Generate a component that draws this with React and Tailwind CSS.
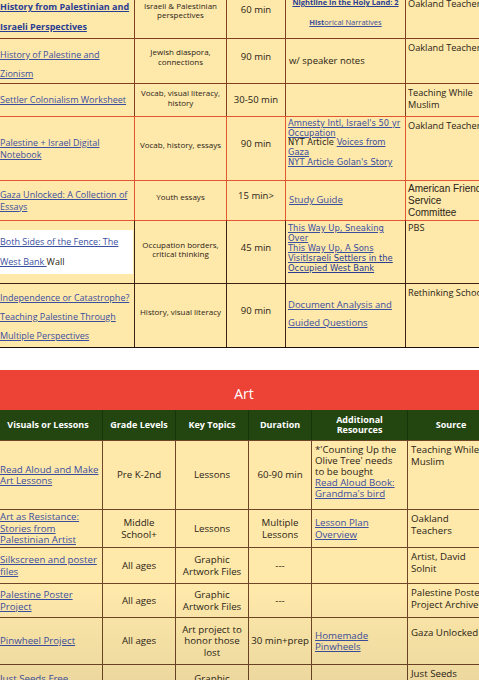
import React from "react"

const SANS = "font-['Open_Sans',sans-serif]"
const VERDANA = "font-['DejaVu_Sans',sans-serif]"
const link = "text-[#3c4f9f] underline"
const boldLink = "text-[#2a3d92] underline font-bold"

// top table border colours, one per row
const BROWN = "border-[#7e3f22]"
const ORANGE = "border-[#e2572f]"
const DARK = "border-[#3a2312]"

const Cell = ({ border, className = "", children, h }) => (
  <td
    className={`border-t border-r ${border} bg-[#fee8aa] p-0 ${className}`}
    style={h ? { height: h } : undefined}
  >
    {children}
  </td>
)

const TopTable = () => (
  <table
    className={`${SANS} w-[522px] table-fixed border-separate border-spacing-0 ml-[-6px] mt-[-13px] text-[#2b2416] border-b border-b-[#1a120a]`}
  >
    <colgroup>
      <col className="w-[141px]" />
      <col className="w-[92px]" />
      <col className="w-[59px]" />
      <col className="w-[120px]" />
      <col className="w-[110px]" />
    </colgroup>
    <tbody>
      <tr>
        <Cell border={BROWN} h={51} className="pl-[6px] align-middle">
          <div className="text-[9px] leading-[20px] pt-[8px]">
            <a className={boldLink}>History from Palestinian and</a>
            <br />
            <a className={boldLink}>Israeli Perspectives</a>
          </div>
        </Cell>
        <Cell border={BROWN} className="text-center align-middle text-[8px] leading-[9.5px] pb-[6px]">
          Israeli &amp; Palestinian
          <br />
          perspectives
        </Cell>
        <Cell border={BROWN} className="text-center align-middle text-[9.5px] pb-[6px]">
          60 min
        </Cell>
        <Cell border={BROWN} className="text-center align-middle text-[7.5px] leading-[20px] pb-[2px]">
          <a className={boldLink}>Nightline in the Holy Land: 2</a>
          <br />
          <a className={link}>
            <b>Hist</b>orical Narratives
          </a>
        </Cell>
        <Cell border={BROWN} className="align-top pl-[2px] pt-[10px] text-[9.2px] leading-[12px]">
          Oakland Teachers
        </Cell>
      </tr>

      <tr>
        <Cell border={BROWN} h={44} className="pl-[6px] align-middle">
          <div className="text-[9px] leading-[19px] pt-[6px]">
            <a className={link}>History of Palestine and</a>
            <br />
            <a className={link}>Zionism</a>
          </div>
        </Cell>
        <Cell border={BROWN} className="text-center align-middle text-[8px] leading-[10px] pb-[8px]">
          Jewish diaspora,
          <br />
          connections
        </Cell>
        <Cell border={BROWN} className="text-center align-middle text-[9.5px] pb-[8px]">
          90 min
        </Cell>
        <Cell border={BROWN} className="align-middle pl-[3px] text-[9.5px]">
          w/ speaker notes
        </Cell>
        <Cell border={BROWN} className="align-top pl-[2px] pt-[3px] text-[9.2px] leading-[12px]">
          Oakland Teachers
        </Cell>
      </tr>

      <tr>
        <Cell border={BROWN} h={33} className="pl-[6px] align-middle text-[9px]">
          <a className={link}>Settler Colonialism Worksheet</a>
        </Cell>
        <Cell border={BROWN} className="text-center align-middle text-[8px] leading-[10.5px] pb-[4px]">
          Vocab, visual literacy,
          <br />
          history
        </Cell>
        <Cell border={BROWN} className="text-center align-middle text-[9.5px]">
          30-50 min
        </Cell>
        <Cell border={BROWN} />
        <Cell border={BROWN} className="align-top pl-[2px] pt-[3px] text-[9.2px] leading-[12px]">
          Teaching While
          <br />
          Muslim
        </Cell>
      </tr>

      <tr>
        <Cell border={ORANGE} h={64} className="pl-[6px] align-middle text-[9px] leading-[12px]">
          <a className={link}>
            Palestine + Israel Digital
            <br />
            Notebook
          </a>
        </Cell>
        <Cell border={ORANGE} className="text-center align-middle text-[8px] pb-[8px]">
          Vocab, history, essays
        </Cell>
        <Cell border={ORANGE} className="text-center align-middle text-[9.5px] pb-[8px]">
          90 min
        </Cell>
        <Cell border={ORANGE} className={`align-top pl-[2px] pt-[2px] ${VERDANA} text-[8.4px] leading-[9.7px]`}>
          <a className={link}>
            Amnesty Intl, Israel&apos;s 50 yr
            <br />
            Occupation
          </a>
          <br />
          NYT Article{" "}
          <a className={link}>
            Voices from
            <br />
            Gaza
          </a>
          <br />
          <a className={link}>NYT Article Golan&apos;s Story</a>
        </Cell>
        <Cell border={ORANGE} className="align-top pl-[2px] pt-[3px] text-[9.2px] leading-[12px]">
          Oakland Teachers
        </Cell>
      </tr>

      <tr>
        <Cell border={ORANGE} h={40} className="pl-[6px] align-middle text-[9px] leading-[12px]">
          <a className={link}>
            Gaza Unlocked: A Collection of
            <br />
            Essays
          </a>
        </Cell>
        <Cell border={ORANGE} className="text-center align-middle text-[8px] pb-[8px]">
          Youth essays
        </Cell>
        <Cell border={ORANGE} className="text-center align-middle text-[9.5px] pb-[8px]">
          15 min&gt;
        </Cell>
        <Cell border={ORANGE} className="align-middle pl-[3px] text-[9.5px]">
          <a className={link}>Study Guide</a>
        </Cell>
        <Cell border={ORANGE} className="align-top pl-[2px] pt-[2px] font-['Liberation_Sans',sans-serif] text-[10px] leading-[12px]">
          American Friends
          <br />
          Service
          <br />
          Committee
        </Cell>
      </tr>

      <tr>
        <Cell border={`${DARK} border-t-[#e2572f]`} h={63} className="pl-[6px] align-middle">
          <div className="bg-white w-[133px] text-[9px] leading-[20px] py-[2px]">
            <a className={link}>Both Sides of the Fence: The</a>
            <br />
            <a className={link}>West Bank </a>Wall
          </div>
        </Cell>
        <Cell border={`${DARK} border-t-[#e2572f]`} className="text-center align-middle text-[8px] leading-[9.5px] pb-[6px]">
          Occupation borders,
          <br />
          critical thinking
        </Cell>
        <Cell border={`${DARK} border-t-[#e2572f]`} className="text-center align-middle text-[9.5px] pb-[8px]">
          45 min
        </Cell>
        <Cell border={`${DARK} border-t-[#e2572f]`} className={`align-top pl-[2px] pt-[2px] ${VERDANA} text-[8.4px] leading-[10px]`}>
          <a className={link}>
            {" "}This Way Up, Sneaking
            <br />
            Over
          </a>
          <br />
          <a className={link}>This Way Up, A Sons</a>
          <br />
          <a className={link}>Visit</a>
          <a className="text-[#2a3d92] underline">
            Israeli Settlers in the
            <br />
            Occupied West Bank
          </a>
        </Cell>
        <Cell border={`${DARK} border-t-[#e2572f]`} className="align-top pl-[2px] pt-[1px] text-[9.2px] leading-[12px]">
          PBS
        </Cell>
      </tr>

      <tr>
        <Cell border={DARK} h={64} className="pl-[6px] align-middle">
          <div className="text-[9px] leading-[19px] pt-[2px]">
            <a className={link}>Independence or Catastrophe?</a>
            <br />
            <a className={link}>Teaching Palestine Through</a>
            <br />
            <a className={link}>Multiple Perspectives</a>
          </div>
        </Cell>
        <Cell border={DARK} className="text-center align-middle text-[8px] pb-[8px]">
          History, visual literacy
        </Cell>
        <Cell border={DARK} className="text-center align-middle text-[9.5px] pb-[8px]">
          90 min
        </Cell>
        <Cell border={DARK} className="align-middle pl-[2px] text-[9.5px] leading-[18px] pb-[4px]">
          <a className={link}>Document Analysis and</a>
          <br />
          <a className={link}>Guided Questions</a>
        </Cell>
        <Cell border={DARK} className="align-top pl-[2px] pt-[3px] text-[9.2px] leading-[12px]">
          Rethinking Schools
        </Cell>
      </tr>
    </tbody>
  </table>
)

const headers = [
  "Visuals or Lessons",
  "Grade Levels",
  "Key Topics",
  "Duration",
  "Additional Resources",
  "Source",
]

const artRows = [
  {
    h: 69,
    title: "Read Aloud and Make Art Lessons",
    grade: "Pre K-2nd",
    topic: "Lessons",
    duration: "60-90 min",
    extra: (
      <>
        *&apos;Counting Up the Olive Tree&apos; needs to be bought
        <br />
        <a className={link}>Read Aloud Book: Grandma&apos;s bird</a>
      </>
    ),
    extraTop: true,
    source: ["Teaching While", "Muslim"],
  },
  {
    h: 38,
    title: "Art as Resistance: Stories from Palestinian Artist",
    grade: "Middle School+",
    topic: "Lessons",
    duration: "Multiple Lessons",
    extra: <a className={link}>Lesson Plan Overview</a>,
    source: ["Oakland", "Teachers"],
  },
  {
    h: 36,
    title: "Silkscreen and poster files",
    grade: "All ages",
    topic: "Graphic Artwork Files",
    duration: "---",
    source: ["Artist, David", "Solnit"],
  },
  {
    h: 34,
    title: "Palestine Poster Project",
    grade: "All ages",
    topic: "Graphic Artwork Files",
    duration: "---",
    source: ["Palestine Poster", "Project Archive"],
  },
  {
    h: 47,
    title: "Pinwheel Project",
    grade: "All ages",
    topic: "Art project to honor those lost",
    duration: "30 min+prep",
    extra: <a className={link}>Homemade Pinwheels</a>,
    source: ["Gaza Unlocked"],
    sourcePad: "pt-[9px]",
  },
  {
    h: 40,
    title: "Just Seeds Free Downloads",
    grade: "All ages",
    topic: "Graphic Artwork Files",
    duration: "---",
    source: ["Just Seeds"],
  },
]

const ArtTable = () => (
  <table
    className={`${SANS} w-[500px] table-fixed border-separate border-spacing-0 ml-[-6px] text-[9.7px] leading-[11.5px] text-[#2b2416]`}
  >
    <colgroup>
      <col className="w-[109px]" />
      <col className="w-[73px]" />
      <col className="w-[73px]" />
      <col className="w-[63px]" />
      <col className="w-[96px]" />
      <col className="w-[86px]" />
    </colgroup>
    <tbody>
      <tr>
        <td
          colSpan={6}
          className="h-[40px] bg-[#ec4336] text-white text-center align-middle text-[14px] pt-[8px]"
        >
          Art
        </td>
      </tr>
      <tr>
        {headers.map((label, i) => (
          <th
            key={label}
            className={`h-[30px] bg-[#234611] text-white font-bold text-[9px] leading-[10px] text-center align-middle px-[6px] ${
              i < 5 ? "border-r border-[#183409]" : ""
            }`}
          >
            {label}
          </th>
        ))}
      </tr>
      {artRows.map((row, index) => (
        <tr key={index}>
          <td
            className="border-t border-r border-[#6e4526] bg-[#fee8aa] pl-[6px] pr-[2px] align-middle"
            style={{ height: row.h }}
          >
            <a className={link}>{row.title}</a>
          </td>
          <td className="border-t border-r border-[#6e4526] bg-[#fee8aa] text-center align-middle px-[4px]">
            {row.grade}
          </td>
          <td className="border-t border-r border-[#6e4526] bg-[#fee8aa] text-center align-middle px-[3px]">
            {row.topic}
          </td>
          <td className="border-t border-r border-[#6e4526] bg-[#fee8aa] text-center align-middle px-[2px]">
            {row.duration}
          </td>
          <td
            className={`border-t border-r border-[#6e4526] bg-[#fee8aa] pl-[3px] pr-[8px] ${
              row.extraTop ? "align-top pt-[3px] leading-[11px]" : "align-middle"
            }`}
          >
            {row.extra}
          </td>
          <td
            className={`border-t border-[#6e4526] bg-[#fee8aa] align-top pl-[3px] leading-[12px] whitespace-nowrap ${
              row.sourcePad || "pt-[3px]"
            }`}
          >
            {row.source.map((line, i) => (
              <div key={i}>{line}</div>
            ))}
          </td>
        </tr>
      ))}
    </tbody>
  </table>
)

export default function App() {
  return (
    <div className="relative w-[479px] h-[680px] overflow-hidden bg-white">
      <TopTable />
      <div className="h-[22px]" />
      <ArtTable />
      <div className="pointer-events-none absolute inset-x-0 bottom-0 h-[90px] bg-gradient-to-b from-transparent to-black/[0.07]" />
    </div>
  )
}
